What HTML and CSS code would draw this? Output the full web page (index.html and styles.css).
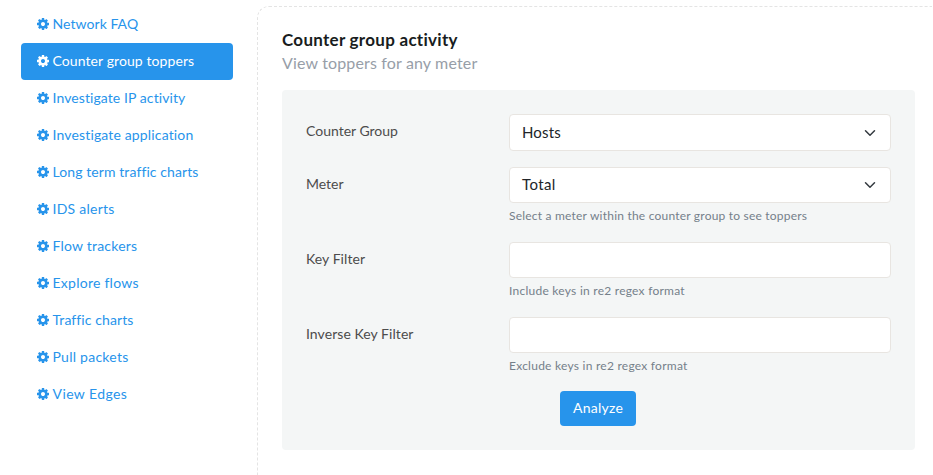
FILE: index.html
```html
<!DOCTYPE html>
<html lang="en">
<head>
<meta charset="utf-8">
<title>Counter group activity</title>
<link rel="stylesheet" href="styles.css">
</head>
<body>
<svg width="0" height="0" class="sprite" aria-hidden="true">
<symbol id="cog" viewBox="128 128 1536 1536"><path d="M1152 896q0-106-75-181t-181-75-181 75-75 181 75 181 181 75 181-75 75-181zm512-109v222q0 12-8 23t-20 13l-185 28q-19 54-39 91 35 50 107 138 10 12 10 25t-9 23q-27 37-99 108t-94 71q-12 0-26-9l-138-108q-44 23-91 38-16 136-29 186-7 28-36 28h-222q-14 0-24.500-8.500t-11.500-21.500l-28-184q-49-16-90-37l-141 107q-10 9-25 9-14 0-25-11-126-114-165-168-7-10-7-23 0-12 8-23 15-21 51-66.500t54-70.500q-27-50-41-99l-183-27q-13-2-21-12.500t-8-23.500v-222q0-12 8-23t19-13l186-28q14-46 39-92-40-57-107-138-10-12-10-24 0-10 9-23 26-36 98.500-107.500t94.500-71.500q13 0 26 10l138 107q44-23 91-38 16-136 29-186 7-28 36-28h222q14 0 24.500 8.500t11.500 21.500l28 184q49 16 90 37l142-107q9-9 24-9 13 0 25 10 129 119 165 170 7 8 7 22 0 12-8 23-15 21-51 66.500t-54 70.500q26 50 41 98l183 28q13 2 21 12.500t8 23.500z"/></symbol>
<symbol id="chevron" viewBox="0 0 16 16"><path d="M2 5l6 6 6-6" fill="none" stroke="#343a40" stroke-width="2" stroke-linecap="round" stroke-linejoin="round"/></symbol>
</svg>
<div class="layout">
<nav class="nav">
<a class="nav-link t05"><svg class="cog"><use href="#cog"/></svg>Network FAQ</a>
<a class="nav-link active t10"><svg class="cog"><use href="#cog"/></svg>Counter group toppers</a>
<a class="nav-link t10"><svg class="cog"><use href="#cog"/></svg>Investigate IP activity</a>
<a class="nav-link t15"><svg class="cog"><use href="#cog"/></svg>Investigate application</a>
<a class="nav-link t10"><svg class="cog"><use href="#cog"/></svg>Long term traffic charts</a>
<a class="nav-link t25"><svg class="cog"><use href="#cog"/></svg>IDS alerts</a>
<a class="nav-link t20"><svg class="cog"><use href="#cog"/></svg>Flow trackers</a>
<a class="nav-link t25"><svg class="cog"><use href="#cog"/></svg>Explore flows</a>
<a class="nav-link t10"><svg class="cog"><use href="#cog"/></svg>Traffic charts</a>
<a class="nav-link t25"><svg class="cog"><use href="#cog"/></svg>Pull packets</a>
<a class="nav-link t40"><svg class="cog"><use href="#cog"/></svg>View Edges</a>
</nav>
<main class="panel">
<h1 class="title">Counter group activity</h1>
<p class="subtitle">View toppers for any meter</p>
<form class="form">
<div class="row row-first"><span class="label">Counter Group</span>
<div class="field"><div class="control t15">Hosts<svg class="chevron"><use href="#chevron"/></svg></div></div></div>
<div class="row"><span class="label">Meter</span>
<div class="field"><div class="control t40">Total<svg class="chevron"><use href="#chevron"/></svg></div><small class="help t20">Select a meter within the counter group to see toppers</small></div></div>
<div class="row"><span class="label t05">Key Filter</span>
<div class="field"><input class="control" type="text" aria-label="Key Filter"><small class="help t25">Include keys in re2 regex format</small></div></div>
<div class="row"><span class="label t05">Inverse Key Filter</span>
<div class="field"><input class="control" type="text" aria-label="Inverse Key Filter"><small class="help t25">Exclude keys in re2 regex format</small></div></div>
<button class="button" type="button">Analyze</button>
</form>
</main>
</div>
</body>
</html>
```
FILE: styles.css
```css
* { box-sizing: border-box; }
body { margin: 0; height: 475px; background: #fff; color: #4c4c4c; font: 14px/21px Lato, sans-serif; }
.sprite { display: block; height: 0; }
.layout { display: flex; align-items: flex-start; padding: 6px 1px 0 21px; }
.nav { width: 212px; margin-right: 24px; flex: none; }
.nav-link { display: flex; align-items: center; height: 37px; padding: 0 16px 2px; border-radius: 4px; color: #2794eb; }
.nav-link.active { background: #2794eb; color: #fff; }
.cog { width: 12px; height: 12px; margin: 1px 3.5px 0 0; fill: currentColor; flex: none; }
.panel { flex: 1; min-width: 0; height: 469px; padding: 21px 0 0 24px; border: 1px dashed #e4e4e4; border-right: 0; border-bottom: 0; border-top-left-radius: 12px; }
.title { margin: 0; font-size: 17px; line-height: 24px; font-weight: 700; color: #181c20; letter-spacing: .28px; }
.subtitle { margin: 0 0 16px; font-size: 16px; line-height: 22px; color: #979ea8; letter-spacing: .15px; }
.form { width: 633px; height: 360px; padding: 24px; border-radius: 4px; background: #f4f6f6; }
.row { display: flex; height: 75px; }
.row-first { height: 53px; }
.row-first .control { height: 37px; }
.label { width: 203px; padding-top: 6px; flex: none; }
.field { width: 382px; }
.control { display: flex; align-items: center; justify-content: space-between; width: 100%; height: 36px; padding: 0 12px 2px; border: 1px solid #e8e5e1; border-radius: 4px; background: #fff; color: #212529; font: 15px/22px Lato, sans-serif; outline: 0; }
.chevron { width: 12px; height: 12px; margin: 2px 2px 0 0; }
.help { display: block; margin-top: 4px; font-size: 12px; line-height: 18px; color: #75808a; }
.button { display: block; width: 76px; height: 35px; margin: -1px 0 0 254px; padding: 0 0 2px; border: 0; border-radius: 4px; background: #2794eb; color: #fff; font: 14px/21px Lato, sans-serif; letter-spacing: .25px; }
.t05 { letter-spacing: .06px; }
.t10 { letter-spacing: .09px; }
.t15 { letter-spacing: .15px; }
.t20 { letter-spacing: .21px; }
.t25 { letter-spacing: .25px; }
.t40 { letter-spacing: .4px; }
```
